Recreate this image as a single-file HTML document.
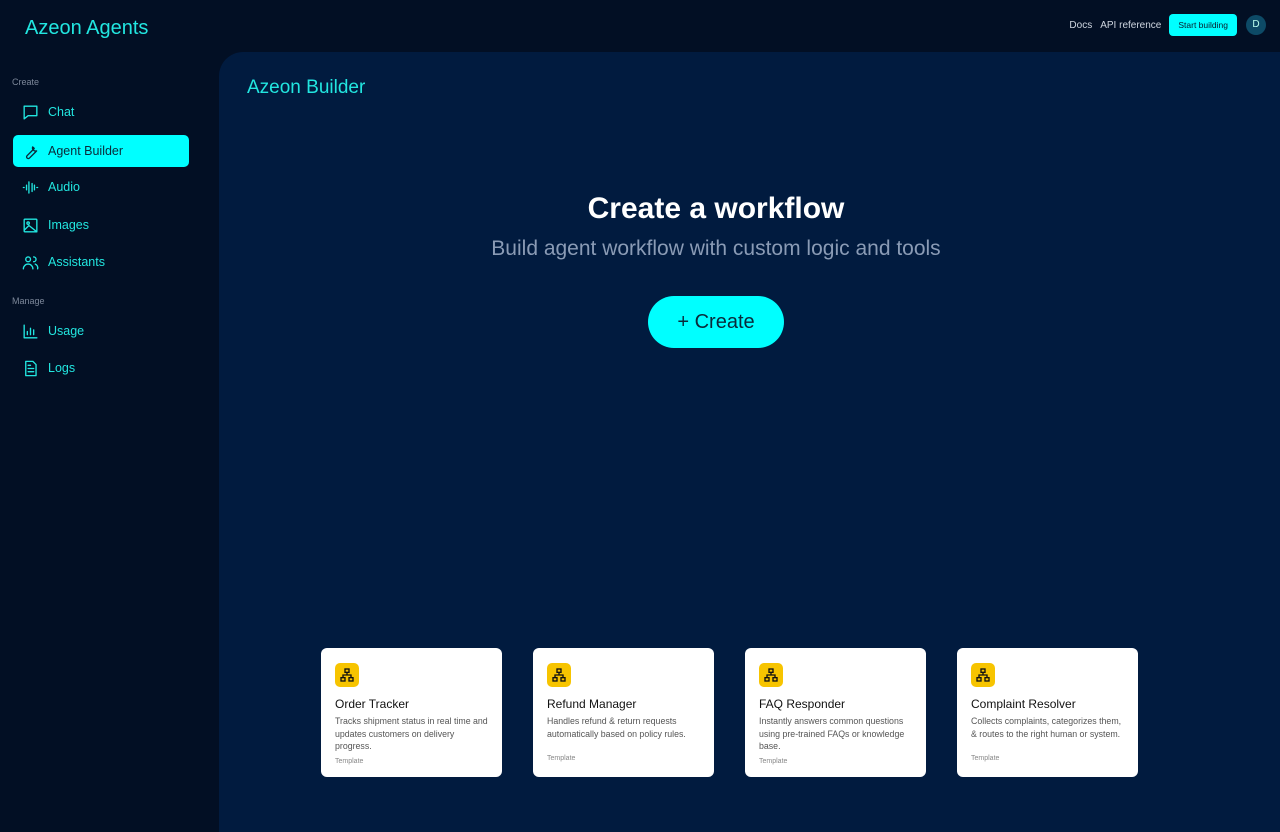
<!DOCTYPE html>
<html><head><meta charset="utf-8"><style>
*{margin:0;padding:0;box-sizing:border-box}
body{width:1280px;height:832px;overflow:hidden;background:#020f24;font-family:"Liberation Sans",sans-serif;position:relative}
.logo{position:absolute;left:25px;top:17px;font-size:20px;color:#22e6e0}
.top{position:absolute;right:0;top:14px;display:flex;align-items:center;font-size:10px;color:#cfd6e0}
.top span{margin-right:8px}
.sb{background:#00ffff;color:#0a1a2a;border-radius:4px;padding:0 9px;height:22px;line-height:22px;font-size:8.5px;margin-right:9px}
.av{width:20px;height:20px;border-radius:50%;background:#0d4a66;color:#bfe;font-size:10px;text-align:center;line-height:20px;margin-right:14px}
.sec{position:absolute;left:12px;font-size:9px;color:#7c8799}
.item{position:absolute;left:13px;width:176px;height:32px;display:flex;align-items:center;padding-left:8px;color:#22e6e0;font-size:12.5px;border-radius:5px}
.item svg{width:19px;height:19px;margin-right:8px;fill:none;stroke:currentColor;stroke-width:1.7;stroke-linecap:round;stroke-linejoin:round}
.item.act{background:#00ffff;color:#0a2a3a}
.main{position:absolute;left:219px;top:52px;width:1061px;height:780px;background:#011b3f;border-top-left-radius:24px}
.title{position:absolute;left:28px;top:25px;font-size:19px;color:#22e6e0}
h1{position:absolute;left:0;width:994px;top:140px;text-align:center;font-size:30px;color:#fff;font-weight:bold}
.sub{position:absolute;left:0;width:994px;top:185px;text-align:center;font-size:21px;color:#8a9bb5}
.btn{position:absolute;left:429px;top:244px;width:136px;height:52px;border-radius:26px;background:#00ffff;color:#0a2a3a;font-size:20px;text-align:center;line-height:52px}
.card{position:absolute;top:596px;width:181px;height:129px;background:#fff;border-radius:6px;padding:15px 14px}
.ic{width:24px;height:24px;border-radius:5px;background:#f7c400;display:flex;align-items:center;justify-content:center}
.card h3{font-weight:normal;font-size:12px;color:#111;margin-top:10px}
.card p{font-size:8.8px;color:#555;line-height:12.5px;margin-top:4px}
.card small{display:block;font-size:7px;color:#888;margin-top:5px}
</style></head><body>
<div class="logo">Azeon Agents</div>
<div class="top"><span>Docs</span><span>API reference</span><div class="sb">Start building</div><div class="av">D</div></div>
<div class="sec" style="top:77px">Create</div>
<div class="item" style="top:96px"><svg viewBox="0 0 24 24"><path d="M4 4h16v12H9l-5 4z"/></svg>Chat</div>
<div class="item act" style="top:135px"><svg viewBox="0 0 24 24"><path d="M14.7 6.3a4 4 0 0 0 5 5l-1 1-8 8a2 2 0 0 1-3-3l8-8 1-1a4 4 0 0 0-2-2z"/></svg>Agent Builder</div>
<div class="item" style="top:171px"><svg viewBox="0 0 24 24"><path d="M3 12h1M7 9v6M10 5v14M14 7v10M17 9v6M20 12h1"/></svg>Audio</div>
<div class="item" style="top:209px"><svg viewBox="0 0 24 24"><rect x="4" y="4" width="16" height="16" rx="1"/><circle cx="9" cy="9" r="1.5"/><path d="M4 18l6-6 10 8"/></svg>Images</div>
<div class="item" style="top:246px"><svg viewBox="0 0 24 24"><circle cx="9" cy="8" r="3"/><path d="M3 20a6 6 0 0 1 12 0M16 5a3 3 0 0 1 0 6M18 14a5 5 0 0 1 3 6"/></svg>Assistants</div>
<div class="sec" style="top:296px">Manage</div>
<div class="item" style="top:315px"><svg viewBox="0 0 24 24"><path d="M4 4v16h16M8 16v-4M12 16V8M16 16v-6"/></svg>Usage</div>
<div class="item" style="top:352px"><svg viewBox="0 0 24 24"><path d="M6 3h9l4 4v14H6zM9 12h7M9 16h7M9 8h3"/></svg>Logs</div>
<div class="main">
<div class="title">Azeon Builder</div>
<h1>Create a workflow</h1>
<div class="sub">Build agent workflow with custom logic and tools</div>
<div class="btn">+ Create</div>
<div class="card" style="left:102px"><div class="ic"><svg width="16" height="16" viewBox="0 0 24 24" fill="none" stroke="#111" stroke-width="2"><rect x="9" y="3" width="6" height="5"/><rect x="3" y="16" width="6" height="5"/><rect x="15" y="16" width="6" height="5"/><path d="M12 8v4M6 16v-4h12v4"/></svg></div><h3>Order Tracker</h3><p>Tracks shipment status in real time and updates customers on delivery progress.</p><small>Template</small></div>
<div class="card" style="left:314px"><div class="ic"><svg width="16" height="16" viewBox="0 0 24 24" fill="none" stroke="#111" stroke-width="2"><rect x="9" y="3" width="6" height="5"/><rect x="3" y="16" width="6" height="5"/><rect x="15" y="16" width="6" height="5"/><path d="M12 8v4M6 16v-4h12v4"/></svg></div><h3>Refund Manager</h3><p>Handles refund &amp; return requests automatically based on policy rules.</p><small style="margin-top:15px">Template</small></div>
<div class="card" style="left:526px"><div class="ic"><svg width="16" height="16" viewBox="0 0 24 24" fill="none" stroke="#111" stroke-width="2"><rect x="9" y="3" width="6" height="5"/><rect x="3" y="16" width="6" height="5"/><rect x="15" y="16" width="6" height="5"/><path d="M12 8v4M6 16v-4h12v4"/></svg></div><h3>FAQ Responder</h3><p>Instantly answers common questions using pre-trained FAQs or knowledge base.</p><small>Template</small></div>
<div class="card" style="left:738px"><div class="ic"><svg width="16" height="16" viewBox="0 0 24 24" fill="none" stroke="#111" stroke-width="2"><rect x="9" y="3" width="6" height="5"/><rect x="3" y="16" width="6" height="5"/><rect x="15" y="16" width="6" height="5"/><path d="M12 8v4M6 16v-4h12v4"/></svg></div><h3>Complaint Resolver</h3><p>Collects complaints, categorizes them, &amp; routes to the right human or system.</p><small style="margin-top:15px">Template</small></div>
</div>
</body></html>
